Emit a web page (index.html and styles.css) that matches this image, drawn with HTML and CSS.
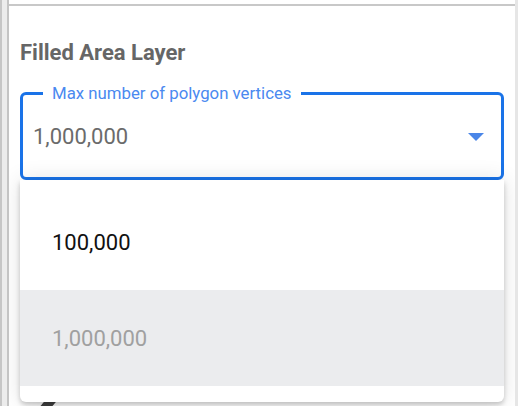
FILE: index.html
```html
<!DOCTYPE html>
<html>
<head>
<meta charset="utf-8">
<link rel="stylesheet" href="styles.css">
</head>
<body>
<div class="shell">
  <div class="edge-outer"></div>
  <div class="edge-inner"></div>
  <main class="panel">
    <div class="panel-top"></div>
    <section class="layer">
      <h2 class="layer-title">Filled Area Layer</h2>
      <div class="select-wrap">
        <fieldset class="select">
          <legend class="select-label">Max number of polygon vertices</legend>
          <div class="select-row">
            <span class="select-value">1,000,000</span>
            <svg class="select-arrow" width="16" height="8" viewBox="0 0 16 8"><path d="M0 0H16L8 8Z" fill="#4a86e8"/></svg>
          </div>
        </fieldset>
        <ul class="menu">
          <li class="menu-item">100,000</li>
          <li class="menu-item is-selected">1,000,000</li>
        </ul>
      </div>
      <div class="below">
        <div class="slider-knob"></div>
      </div>
    </section>
  </main>
  <div class="edge-right"></div>
</div>
</body>
</html>
```
FILE: styles.css
```css
html, body {
  margin: 0;
  padding: 0;
}
body {
  width: 518px;
  height: 406px;
  overflow: hidden;
  background: #ffffff;
  font-family: Roboto, "Noto Sans", sans-serif;
}
.shell {
  display: flex;
  height: 406px;
}
.edge-outer {
  width: 2px;
  background: #c6c6c6;
}
.edge-inner {
  width: 5px;
  background: #ececec;
}
.panel {
  flex: 1;
  border-left: 2px solid #c4c4c4;
  background: #ffffff;
  display: flex;
  flex-direction: column;
  min-height: 0;
}
.panel-top {
  height: 4px;
  border-bottom: 2px solid #c8c8c8;
}
.edge-right {
  width: 3px;
  background: #e6e6e6;
}
.layer {
  flex: 1;
  min-height: 0;
  overflow: hidden;
  padding: 0 11px;
}
.layer-title {
  margin: 34px 0 0;
  font-size: 22px;
  font-weight: 700;
  color: #666666;
  line-height: 26px;
}
.select-wrap {
  position: relative;
  margin-top: 17px;
}
.select {
  margin: 0;
  padding: 0 10px 7px;
  border: 3px solid #1a73e8;
  border-radius: 6px;
}
.select-label {
  margin-left: 10px;
  padding: 0 9px;
  font-size: 16.8px;
  line-height: 20px;
  color: #4a89f0;
}
.select-row {
  display: flex;
  align-items: center;
  justify-content: space-between;
  height: 67px;
  padding-right: 7px;
}
.select-value {
  font-size: 22px;
  color: #6b6b6b;
}
.select-arrow {
  display: block;
}
.menu {
  position: absolute;
  left: 0;
  right: 0;
  top: 100%;
  z-index: 2;
  margin: 0;
  padding: 14px 0 16px;
  list-style: none;
  background: #ffffff;
  border-radius: 0 0 6px 6px;
  box-shadow: 0 3px 5px rgba(0, 0, 0, 0.2), 0 0 22px rgba(0, 0, 0, 0.12);
}
.menu-item {
  height: 96px;
  display: flex;
  align-items: center;
  padding: 0 32px;
  font-size: 22px;
  color: #111111;
}
.menu-item.is-selected {
  background: #ebecee;
  color: #a0a0a0;
}
.below {
  padding: 220px 0 0 12px;
}
.slider-knob {
  width: 12px;
  height: 18px;
  background: #404040;
  transform: skewX(-40deg);
  margin-left: 6px;
}
```
